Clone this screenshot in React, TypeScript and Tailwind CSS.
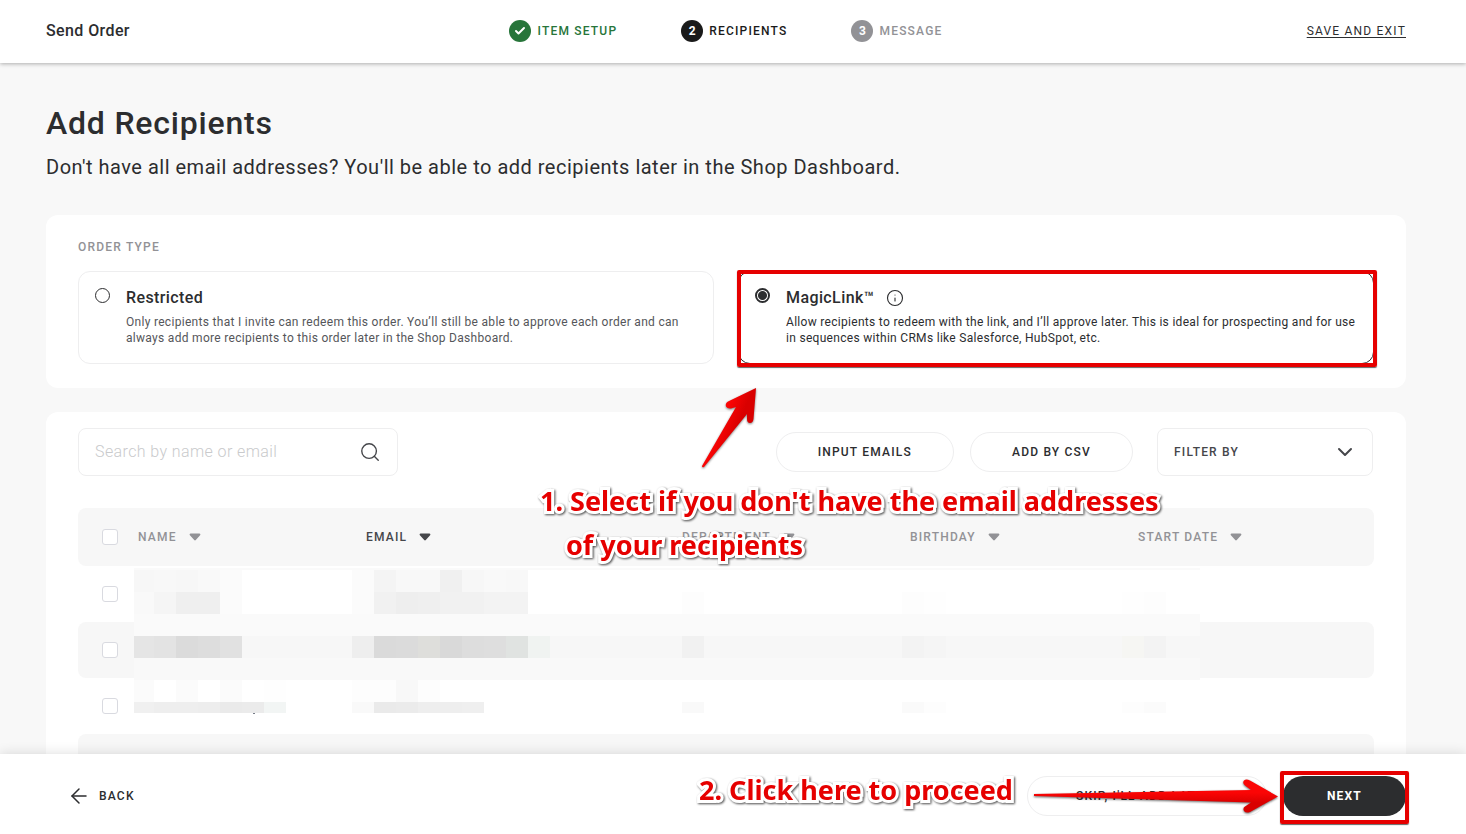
import { ArrowLeft, Check, ChevronDown, Info, Search } from "lucide-react"
import clsx from "clsx"

const steps = [
  { label: "Item Setup", badge: "bg-[#27753a]", text: "text-[#27753a]", done: true },
  { label: "Recipients", badge: "bg-[#1a1a1a]", text: "text-[#1a1a1a]", done: false },
  { label: "Message", badge: "bg-[#929296]", text: "text-[#929296]", done: false },
]

const columns = [
  { label: "Name", width: "w-[228px]", active: false },
  { label: "Email", width: "w-[316px]", active: true },
  { label: "Department", width: "w-[228px]", active: false },
  { label: "Birthday", width: "w-[228px]", active: false },
  { label: "Start Date", width: "", active: false },
]

// [y, height, first x, colours of the 22px cells that follow]
const mosaic: [number, number, number, string[]][] = [
  [2, 22, -2, ["#f7f7f7", "#f8f8f8", "#f7f7f7", "#f9f9f9", "#fbfbfb"]],
  [2, 22, 218, ["#fbfbfb", "#f4f4f4", "#f8f8f8", "#f8f8f8", "#f0f0f0", "#f7f7f7", "#f9f9f9", "#f8f8f8"]],
  [24, 22, -2, ["#f9f9f9", "#f5f5f5", "#efefef", "#efefef", "#fbfbfb"]],
  [24, 22, 218, ["#fbfbfb", "#f1f1f1", "#eeeeee", "#efefef", "#f1f1f1", "#f1f1f1", "#f3f3f3", "#f3f3f3"]],
  [24, 22, 548, ["#fdfdfd"]],
  [24, 22, 768, ["#fdfdfd", "#fefefe"]],
  [24, 22, 988, ["#fefefe", "#fdfdfd"]],
  [68, 22, -2, ["#e5e5e5", "#e3e3e3", "#dbdbdb", "#dddddd", "#e1e1e1"]],
  [68, 22, 218, ["#eeeeee", "#dadada", "#dbdbdb", "#dededb", "#d9d9d9", "#dddddd", "#dedede", "#e0e3e1", "#f0f3f1"]],
  [68, 22, 548, ["#f1f1f1"]],
  [68, 22, 768, ["#f3f3f3", "#f5f5f5"]],
  [68, 22, 988, ["#f6f6f3", "#f3f3f3"]],
  [112, 22, -2, ["#fbfbfb", "#ffffff", "#fbfbfb", "#ffffff", "#fbfbfb", "#ffffff", "#fefefe"]],
  [112, 22, 218, ["#fdfdfd", "#fdfdfd", "#f8f8f8", "#fdfdfd"]],
  [134, 11, -2, ["#f0f0f0", "#eeeeee", "#eeeeee", "#ededed", "#eaeaea", "#ebebeb", "#f2f5f4"]],
  [134, 11, 218, ["#f9f9f9", "#eaeaea", "#ebebeb", "#eeeeee", "#eeeeee", "#efefef"]],
  [134, 11, 548, ["#f9f9f9"]],
  [134, 11, 768, ["#fafafa", "#fdfdfd"]],
  [134, 11, 988, ["#fdfdfd", "#fbfbfb"]],
]

function Mosaic() {
  return (
    <svg
      className="absolute left-14 top-[60px] pointer-events-none"
      width="1066"
      height="146"
      viewBox="0 0 1066 146"
      shapeRendering="crispEdges"
      aria-hidden="true"
    >
      <rect width="1066" height="145" fill="#fff" />
      <rect width="1066" height="2" fill="#fafafa" />
      <rect y="46" width="1066" height="22" fill="#fafafa" />
      <rect y="68" width="1066" height="22" fill="#f7f7f7" />
      <rect y="90" width="1066" height="22" fill="#f9f9f9" />
      {mosaic.map(([y, height, x, fills]) =>
        fills.map((fill, i) => (
          <rect key={`${y}-${x}-${i}`} x={x + i * 22} y={y} width="22" height={height} fill={fill} />
        ))
      )}
      <rect x="119" y="145" width="2" height="1" fill="#777c88" />
    </svg>
  )
}

function SortIcon() {
  return (
    <svg width="12" height="8" viewBox="0 0 12 8" fill="currentColor" aria-hidden="true">
      <path d="M1.6 0.5h8.8c.9 0 1.3 1 .7 1.7L6.8 7c-.4.5-1.200.5-1.600 0L.9 2.200C.3 1.500.7.5 1.600.5z" />
    </svg>
  )
}

function Note({ className, children }: { className: string; children: React.ReactNode }) {
  return (
    <div
      className={clsx(
        "absolute z-10 whitespace-nowrap pointer-events-none font-['Noto_Sans','Open_Sans',sans-serif] text-[27px] leading-[44px] font-bold text-[#e60000]",
        "[-webkit-text-stroke:6px_white] [paint-order:stroke_fill] [stroke-linejoin:round] drop-shadow-[1px_1px_1px_rgba(0,0,0,0.7)]",
        className
      )}
    >
      {children}
    </div>
  )
}

function Highlight({ className }: { className: string }) {
  return (
    <span
      className={clsx(
        "absolute border-4 border-[#e60000] rounded-xs shadow-[0_1px_1px_rgba(0,0,0,0.6)] pointer-events-none",
        className
      )}
    />
  )
}

function OrderType({
  title,
  checked,
  children,
}: {
  title: string
  checked?: boolean
  children: React.ReactNode
}) {
  return (
    <label
      className={clsx(
        "relative flex items-start gap-4 rounded-xl border pl-4 pr-2 pt-4 pb-[17px]",
        checked ? "border-[#2c2d2f] text-[#2c2d2f]" : "border-[#eeeeef] text-[#55565a]"
      )}
    >
      <input
        type="radio"
        name="order-type"
        defaultChecked={checked}
        className={clsx(
          "appearance-none shrink-0 size-[15px] rounded-full border-[#2c2d2f]",
          checked
            ? "border-2 bg-[radial-gradient(circle,#2c2d2f_4px,transparent_5px)]"
            : "border"
        )}
      />
      <span className="flex flex-col gap-1.5">
        <span className="flex items-center gap-3 text-[16px] leading-5 font-medium tracking-wide text-[#2c2d2f]">
          {title}
          {checked && <Info className="size-[18px]" strokeWidth={1.5} />}
        </span>
        <span className="text-[12px] leading-4 tracking-wide">{children}</span>
      </span>
      {checked && <Highlight className="-left-0.5 -top-0.5 -right-1 -bottom-1" />}
    </label>
  )
}

function RowCheckbox({ label }: { label: string }) {
  return (
    <input
      type="checkbox"
      aria-label={label}
      className="appearance-none block size-4 ml-6 rounded-[3px] border border-[#d9dae0] bg-white"
    />
  )
}

const pill =
  "h-10 rounded-full border border-[#eeeeef] text-[12px] font-medium uppercase tracking-widest text-[#2c2d2f]"

export default function App() {
  return (
    <div className="h-screen flex flex-col overflow-hidden bg-[#f8f8f8] font-['Roboto',sans-serif] text-[#2c2d2f]">
      <header className="relative z-10 shrink-0 h-[63px] grid grid-cols-[1fr_auto_1fr] items-center pl-[46px] pr-[60px] pb-0.5 bg-white shadow-[0_1px_4px_rgba(0,0,0,0.3)]">
        <div className="text-[16px] font-medium tracking-wide">Send Order</div>
        <ol className="flex gap-16 text-[12px] font-medium uppercase tracking-widest">
          {steps.map((step, i) => (
            <li key={step.label} className={clsx("flex items-center gap-1.5", step.text)}>
              <span
                className={clsx(
                  "size-[22px] rounded-full flex items-center justify-center text-white font-bold tracking-normal",
                  step.badge
                )}
              >
                {step.done ? <Check className="size-3" strokeWidth={4} /> : i + 1}
              </span>
              {step.label}
            </li>
          ))}
        </ol>
        <a href="#exit" className="justify-self-end text-[12px] uppercase tracking-widest underline underline-offset-2">
          Save and exit
        </a>
      </header>

      <main className="flex-1 min-h-0 overflow-hidden pl-[46px] pr-[60px] pt-10">
        <h1 className="text-[32px] leading-10 font-medium tracking-wide">Add Recipients</h1>
        <p className="mt-2 text-[20px] leading-8 tracking-wide">
          Don't have all email addresses? You'll be able to add recipients later in the Shop Dashboard.
        </p>

        <section className="mt-8 rounded-xl bg-white px-8 py-6">
          <h2 className="text-[12px] leading-4 font-medium uppercase tracking-widest text-[#929296]">Order type</h2>
          <div className="mt-4 grid grid-cols-2 gap-6">
            <OrderType title="Restricted">
              Only recipients that I invite can redeem this order. You’ll still be able to approve each order and can
              always add more recipients to this order later in the Shop Dashboard.
            </OrderType>
            <OrderType title="MagicLink™" checked>
              Allow recipients to redeem with the link, and I’ll approve later. This is ideal for prospecting and for
              use in sequences within CRMs like Salesforce, HubSpot, etc.
            </OrderType>
          </div>
        </section>

        <section className="relative mt-6 rounded-xl bg-white px-8 pt-4">
          <div className="flex items-center pr-px">
            <label className="flex items-center w-80 h-12 px-4 rounded-lg border border-[#eeeeef]">
              <input
                type="text"
                aria-label="Search by name or email"
                placeholder="Search by name or email"
                className="flex-1 min-w-0 outline-none text-[16px] font-light tracking-wide placeholder:text-[#c9cacc]"
              />
              <Search className="size-[22px] text-[#45464a]" strokeWidth={1.5} />
            </label>
            <button className={clsx(pill, "ml-auto px-[41px]")}>Input emails</button>
            <button className={clsx(pill, "ml-4 px-[41px]")}>Add by CSV</button>
            <div className="relative ml-6">
              <select
                aria-label="Filter by"
                className="appearance-none w-[216px] h-12 px-4 rounded-lg border border-[#eeeeef] text-[12px] font-medium uppercase tracking-widest text-[#45464a]"
              >
                <option>Filter by</option>
              </select>
              <ChevronDown className="absolute right-4 top-3 size-6 text-[#45464a] pointer-events-none" strokeWidth={2} />
            </div>
          </div>

          <div className="relative mt-8">
            <table className="w-full table-fixed border-separate border-spacing-0">
              <thead>
                <tr className="h-[58px]">
                  <th className="w-[60px] rounded-l-lg bg-[#f7f7f7] p-0">
                    <RowCheckbox label="Select all" />
                  </th>
                  {columns.map((column) => (
                    <th key={column.label} className={clsx("p-0 bg-[#f7f7f7] last:rounded-r-lg", column.width)}>
                      <button
                        className={clsx(
                          "flex items-center gap-3 text-[12px] leading-4 font-medium uppercase tracking-widest",
                          column.active ? "text-[#45464a]" : "text-[#929296]"
                        )}
                      >
                        {column.label}
                        <SortIcon />
                      </button>
                    </th>
                  ))}
                </tr>
              </thead>
              <tbody>
                {[1, 2, 3, 4].map((row) => (
                  <tr key={row} className="group h-14">
                    <td className="p-0 rounded-l-lg group-even:bg-[#f7f7f7]">
                      <RowCheckbox label={`Select recipient ${row}`} />
                    </td>
                    <td colSpan={5} className="p-0 rounded-r-lg group-even:bg-[#f7f7f7]" />
                  </tr>
                ))}
              </tbody>
            </table>
            <Mosaic />
          </div>

          <svg
            className="absolute left-[650px] -top-7 pointer-events-none drop-shadow-[0_1px_1px_rgba(0,0,0,0.5)]"
            width="64"
            height="88"
            viewBox="0 0 64 88"
            aria-hidden="true"
          >
            <defs>
              <linearGradient id="up" x1="0" y1="0" x2="1" y2="0.6">
                <stop offset="0.45" stopColor="#fb0505" />
                <stop offset="0.7" stopColor="#d90000" />
              </linearGradient>
            </defs>
            <path
              d="M60 4 L32 17.500 Q29 19.500 30 22.500 Q31.500 25 35 24.500 L40 23 L6 82 Q6 84 8 83 L51 30 L51 35 Q51 39 54 39 Q57 39 57.500 35 Z"
              fill="url(#up)"
            />
          </svg>
          <Note className="left-[494px] top-[67px]">
            <div>1. Select if you don't have the email addresses</div>
            <div className="pl-[26px]">of your recipients</div>
          </Note>
        </section>
      </main>

      <footer className="relative z-10 shrink-0 h-20 flex items-center gap-4 pl-[67px] pr-[60px] pt-1 bg-white shadow-[0_0_12px_rgba(0,0,0,0.14)]">
        <button className="flex items-center gap-2 mr-auto text-[12px] font-medium uppercase tracking-widest">
          <ArrowLeft className="size-6" strokeWidth={1.5} />
          Back
        </button>
        <div className="relative">
          <button className={clsx(pill, "w-60 pl-12 text-left")}>Skip, I'll add later</button>
          <Note className="right-[254px] -top-2">2. Click here to proceed</Note>
          <svg
            className="absolute -right-3 top-0 z-10 pointer-events-none drop-shadow-[0_1px_1px_rgba(0,0,0,0.6)]"
            width="246"
            height="40"
            viewBox="0 0 246 40"
            aria-hidden="true"
          >
            <defs>
              <linearGradient id="across" x1="0" y1="0" x2="0" y2="1">
                <stop offset="0.4" stopColor="#fb0505" />
                <stop offset="0.7" stopColor="#d90000" />
              </linearGradient>
            </defs>
            <path
              d="M1 18 L218 14 L212 9.500 Q209 7 211 4.500 Q213 2.500 217 4.500 L245 20.500 L217 36 Q213 37.500 211 35 Q209.500 32 212 30.500 L218 26.500 L1 20 Z"
              fill="url(#across)"
            />
          </svg>
        </div>
        <div className="relative">
          <button className="h-10 px-11 rounded-full bg-[#2c2d2f] text-white text-[12px] font-bold uppercase tracking-widest">
            Next
          </button>
          <Highlight className="-left-[3px] -top-[5px] -right-[3px] -bottom-2" />
        </div>
      </footer>
    </div>
  )
}
